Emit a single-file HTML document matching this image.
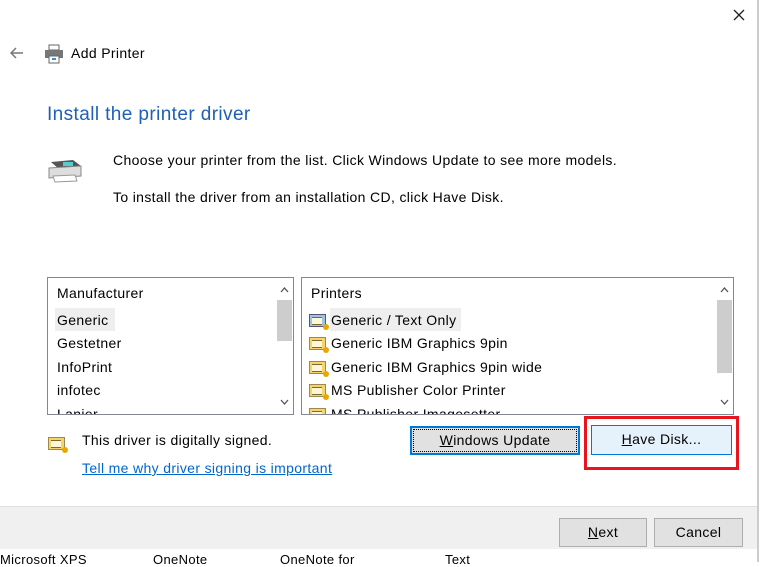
<!DOCTYPE html>
<html><head><style>
body{margin:0;width:762px;height:562px;overflow:hidden;background:#fff;font-family:"Segoe UI","Liberation Sans",sans-serif;font-size:14px;letter-spacing:0.35px;color:#000;position:relative}
.a{position:absolute;white-space:nowrap}
.lb{position:absolute;border:1px solid #828790;background:#fff;overflow:hidden}
.sb{position:absolute;top:0;right:0;width:17px;bottom:0;background:#fff}
.thumb{position:absolute;left:1px;right:1px;background:#cdcdcd}
.btn{position:absolute;border:1px solid #adadad;background:#e1e1e1;text-align:center;font-size:14px;box-sizing:border-box}
.ic{position:absolute;width:17px;height:13px;border:1px solid #9a8a50;background:#f6d36b;box-sizing:border-box}
.ic:after{content:"";position:absolute;right:-4px;bottom:-4px;width:6px;height:6px;border-radius:50%;background:#e8a800}
.ic:before{content:"";position:absolute;left:2px;top:2px;width:10px;height:6px;border-top:1px solid #7a6a30;border-bottom:1px solid #7a6a30;background:#fff6d8}
</style></head><body>
<svg class="a" style="left:733px;top:9px" width="12" height="12" viewBox="0 0 12 12"><path d="M1 1L11 11M11 1L1 11" stroke="#222" stroke-width="1.3"/></svg>
<div class="a" style="left:757px;top:0;width:2px;height:562px;background:#ccc"></div>
<svg class="a" style="left:10px;top:47px" width="14" height="12" viewBox="0 0 14 12"><path d="M13 6H2M6 1L1 6L6 11" stroke="#777" stroke-width="1.5" fill="none"/></svg>
<svg class="a" style="left:44px;top:44px" width="20" height="20" viewBox="0 0 20 20"><rect x="5" y="1" width="10" height="5" fill="#fff" stroke="#666"/><rect x="1" y="6" width="18" height="8" fill="#777"/><rect x="5" y="12" width="10" height="7" fill="#fff" stroke="#666"/><rect x="8" y="14" width="4" height="2" fill="#3a8bd8"/></svg>
<div class="a" style="left:71px;top:45px;font-size:14px">Add Printer</div>
<div class="a" style="left:47px;top:104px;font-size:19px;color:#1f5fb5;letter-spacing:0.4px">Install the printer driver</div>
<svg class="a" style="left:47px;top:156px" width="36" height="28" viewBox="0 0 36 28"><path d="M4 6 L26 4 L34 10 L12 13 Z" fill="#555"/><rect x="16" y="6" width="10" height="4" fill="#5cc"/><path d="M2 12 L34 10 L34 20 L2 22 Z" fill="#ddd" stroke="#888"/><path d="M6 20 L28 19 L30 25 L8 26Z" fill="#fff" stroke="#999"/></svg>
<div class="a" style="left:113px;top:152px">Choose your printer from the list. Click Windows Update to see more models.</div>
<div class="a" style="left:113px;top:189px">To install the driver from an installation CD, click Have Disk.</div>

<div class="lb" style="left:47px;top:277px;width:245px;height:136px">
<div class="a" style="left:9px;top:7px">Manufacturer</div>
<div class="a" style="left:7px;top:30px;width:60px;height:23px;background:#eee"></div>
<div class="a" style="left:9px;top:34px">Generic</div>
<div class="a" style="left:9px;top:57px">Gestetner</div>
<div class="a" style="left:9px;top:81px">InfoPrint</div>
<div class="a" style="left:9px;top:104px">infotec</div>
<div class="a" style="left:9px;top:128px">Lanier</div>
<div class="sb"><svg class="a" style="left:4px;top:9px" width="9" height="6"><path d="M1 5L4.5 1L8 5" stroke="#555" stroke-width="1.3" fill="none"/></svg><div class="thumb" style="top:22px;height:41px"></div><svg class="a" style="left:4px;top:121px" width="9" height="6"><path d="M1 1L4.5 5L8 1" stroke="#555" stroke-width="1.3" fill="none"/></svg></div>
</div>

<div class="lb" style="left:301px;top:277px;width:431px;height:136px">
<div class="a" style="left:9px;top:7px">Printers</div>
<div class="a" style="left:28px;top:30px;width:131px;height:23px;background:#eee"></div>
<div class="ic" style="left:7px;top:36px;background:#9cc4e4;border-color:#557"></div><div class="a" style="left:29px;top:34px">Generic / Text Only</div>
<div class="ic" style="left:7px;top:59px"></div><div class="a" style="left:29px;top:57px">Generic IBM Graphics 9pin</div>
<div class="ic" style="left:7px;top:83px"></div><div class="a" style="left:29px;top:81px">Generic IBM Graphics 9pin wide</div>
<div class="ic" style="left:7px;top:106px"></div><div class="a" style="left:29px;top:104px">MS Publisher Color Printer</div>
<div class="ic" style="left:7px;top:130px"></div><div class="a" style="left:29px;top:128px">MS Publisher Imagesetter</div>
<div class="sb"><svg class="a" style="left:4px;top:9px" width="9" height="6"><path d="M1 5L4.5 1L8 5" stroke="#555" stroke-width="1.3" fill="none"/></svg><div class="thumb" style="top:22px;height:73px"></div><svg class="a" style="left:4px;top:121px" width="9" height="6"><path d="M1 1L4.5 5L8 1" stroke="#555" stroke-width="1.3" fill="none"/></svg></div>
</div>

<div class="ic" style="left:48px;top:437px"></div>
<div class="a" style="left:82px;top:432px">This driver is digitally signed.</div>
<div class="a" style="left:82px;top:460px;color:#0066cc;text-decoration:underline">Tell me why driver signing is important</div>

<div class="btn" style="left:410px;top:426px;width:170px;height:29px;border:2px solid #0078d7;line-height:24px"><div style="position:absolute;inset:1px;border:1px dotted #000"></div><u>W</u>indows Update</div>
<div class="a" style="left:584px;top:416px;width:149px;height:48px;border:3px solid #e8141e"></div>
<div class="btn" style="left:591px;top:425px;width:141px;height:30px;border:1px solid #0078d7;background:#e5f1fb;line-height:27px"><u>H</u>ave Disk...</div>

<div class="a" style="left:0;top:506px;width:757px;height:42px;background:#f0f0f0;border-top:1px solid #dfdfdf"></div>
<div class="btn" style="left:559px;top:518px;width:88px;height:29px;line-height:27px"><u>N</u>ext</div>
<div class="btn" style="left:654px;top:518px;width:89px;height:29px;line-height:27px">Cancel</div>
<div class="a" style="left:0;top:552px;font-size:13px">Microsoft XPS</div>
<div class="a" style="left:153px;top:552px;font-size:13px">OneNote</div>
<div class="a" style="left:280px;top:552px;font-size:13px">OneNote for</div>
<div class="a" style="left:445px;top:552px;font-size:13px">Text</div>
</body></html>
